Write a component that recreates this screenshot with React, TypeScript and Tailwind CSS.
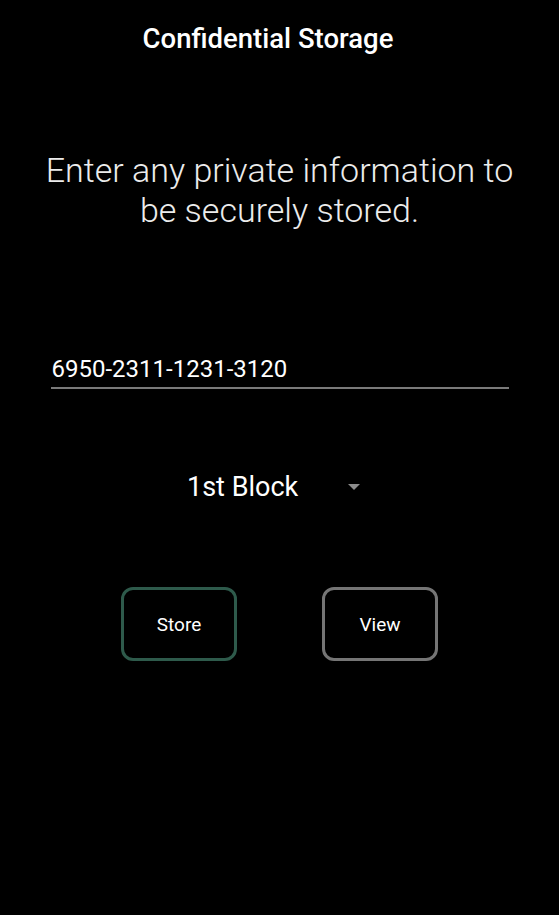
import React from "react";

export default function App() {
  return (
    <div
      className="w-[559px] h-[915px] bg-black text-white flex flex-col items-center"
      style={{ fontFamily: "Roboto, 'Liberation Sans', sans-serif" }}
    >
      <div className="h-[80px] w-full flex items-start justify-center pt-[22px] pr-[23px]">
        <span className="text-[27.5px] leading-[34px] font-medium text-white">
          Confidential Storage
        </span>
      </div>
      <div className="mt-[70px] w-full px-[10px] text-center text-[34px] leading-[40px] font-light text-[#ececec]">
        Enter any private information to
        <br />
        be securely stored.
      </div>
      <div className="mt-[123px] w-[458px] flex flex-col">
        <div className="text-[24px] leading-[32px] pl-[1px] text-white">6950-2311-1231-3120</div>
        <div className="mt-[2px] h-[2px] bg-[#7a7a7a]" />
      </div>
      <div className="mt-[81px] flex items-center w-[174px] ml-[-11px]">
        <span className="text-[27px] leading-[34px] text-white">1st Block</span>
        <div className="ml-auto mr-[1px] w-0 h-0 border-l-[6px] border-r-[6px] border-t-[6px] border-l-transparent border-r-transparent border-t-[#8c8c8c]" />
      </div>
      <div className="mt-[83px] flex gap-[85px]">
        <button className="w-[116px] h-[74px] pt-[3px] rounded-[12px] border-[3px] border-[#2e5a4b] bg-black text-white text-[19px]">
          Store
        </button>
        <button className="w-[116px] h-[74px] pt-[3px] rounded-[12px] border-[3px] border-[#757575] bg-black text-white text-[19px]">
          View
        </button>
      </div>
    </div>
  );
}
